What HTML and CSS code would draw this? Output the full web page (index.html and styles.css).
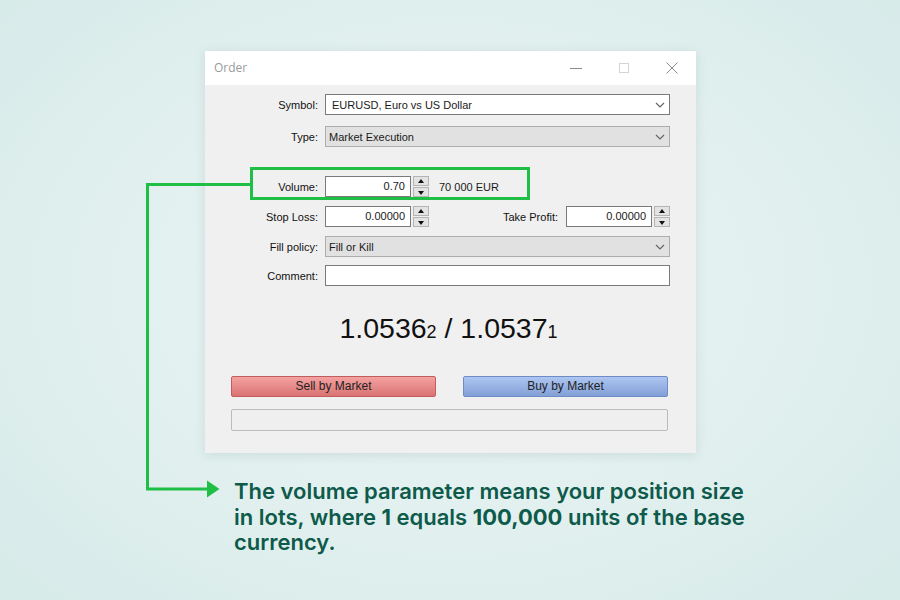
FILE: index.html
```html
<!DOCTYPE html>
<html>
<head>
<meta charset="utf-8">
<link rel="stylesheet" href="styles.css">
</head>
<body>
<div class="stage">
  <div class="window">
    <div class="titlebar">
      <span class="title">Order</span>
      <div class="wincontrols">
        <svg class="wc" width="14" height="14" viewBox="0 0 14 14"><path d="M1 7.5h12" stroke="#8a8a8a" stroke-width="1"/></svg>
        <svg class="wc" width="14" height="14" viewBox="0 0 14 14"><rect x="2.5" y="2.5" width="9" height="9" fill="none" stroke="#d4d4d4" stroke-width="1"/></svg>
        <svg class="wc" width="14" height="14" viewBox="0 0 14 14"><path d="M1.5 1.5l11 11M12.5 1.5l-11 11" stroke="#8a8a8a" stroke-width="1"/></svg>
      </div>
    </div>
    <div class="content">
      <div class="form">
        <div class="row r-symbol">
          <label class="lbl">Symbol:</label>
          <div class="select white"><span>EURUSD, Euro vs US Dollar</span><svg class="chev" width="10" height="6" viewBox="0 0 10 6"><path d="M1 1l4 4 4-4" fill="none" stroke="#666" stroke-width="1.2"/></svg></div>
        </div>
        <div class="row r-type">
          <label class="lbl">Type:</label>
          <div class="select gray"><span>Market Execution</span><svg class="chev" width="10" height="6" viewBox="0 0 10 6"><path d="M1 1l4 4 4-4" fill="none" stroke="#666" stroke-width="1.2"/></svg></div>
        </div>
        <div class="row r-volume">
          <label class="lbl">Volume:</label>
          <div class="numgroup">
            <div class="num">0.70</div>
            <div class="spin"><span class="up"></span><span class="down"></span></div>
            <span class="unit">70 000 EUR</span>
          </div>
        </div>
        <div class="row r-stop">
          <label class="lbl">Stop Loss:</label>
          <div class="numgroup split">
            <div class="num">0.00000</div>
            <div class="spin"><span class="up"></span><span class="down"></span></div>
            <label class="lbl tp">Take Profit:</label>
            <div class="num">0.00000</div>
            <div class="spin"><span class="up"></span><span class="down"></span></div>
          </div>
        </div>
        <div class="row r-fill">
          <label class="lbl">Fill policy:</label>
          <div class="select gray"><span>Fill or Kill</span><svg class="chev" width="10" height="6" viewBox="0 0 10 6"><path d="M1 1l4 4 4-4" fill="none" stroke="#666" stroke-width="1.2"/></svg></div>
        </div>
        <div class="row r-comment">
          <label class="lbl">Comment:</label>
          <div class="select white"></div>
        </div>
      </div>
      <div class="price">1.0536<small>2</small> / 1.0537<small>1</small></div>
      <div class="buttons">
        <div class="btn sell">Sell by Market</div>
        <div class="btn buy">Buy by Market</div>
      </div>
      <div class="progress"></div>
    </div>
  </div>
  <p class="caption">The volume parameter means your position size<br>in lots, where <b>1</b> equals <b>100,000</b> units of the base<br>currency.</p>
</div>
<div class="highlight"></div>
<svg class="connector" width="900" height="600" viewBox="0 0 900 600">
  <path d="M251 184.5H147.5V489H210" fill="none" stroke="#1fbf45" stroke-width="3"/>
  <path d="M207 480.5L219.5 489L207 497.5Z" fill="#1fbf45"/>
</svg>
</body>
</html>
```
FILE: styles.css
```css
html, body {
  margin: 0;
  padding: 0;
}
body {
  width: 900px;
  height: 600px;
  overflow: hidden;
  position: relative;
  background: radial-gradient(ellipse 70% 75% at 50% 48%, #e9f4f3 0%, #e1f0ef 55%, #d6eae8 100%);
  font-family: "Liberation Sans", Arial, sans-serif;
}
.stage {
  padding: 51px 0 0 205px;
}
.window {
  width: 491px;
  box-shadow: 0 2px 10px rgba(90, 130, 125, 0.18);
}
.titlebar {
  height: 34px;
  background: #ffffff;
  display: flex;
  align-items: center;
  justify-content: space-between;
  padding: 0 17px 0 9px;
}
.title {
  font-family: "Open Sans", "Liberation Sans", sans-serif;
  font-size: 12px;
  color: #9a9a9a;
  margin-top: -2px;
}
.wincontrols {
  display: flex;
  gap: 34px;
  align-items: center;
}
.content {
  background: #f0f0f0;
  height: 368px;
  padding: 9px 28px 0 26px;
  box-sizing: border-box;
  font-size: 11px;
  color: #1a1a1a;
}
.form {
  display: flex;
  flex-direction: column;
}
.row {
  display: grid;
  grid-template-columns: 87px 345px;
  column-gap: 7px;
  align-items: center;
  height: 21px;
}
.r-type { margin-top: 11px; }
.r-volume { margin-top: 29px; }
.r-stop { margin-top: 9px; }
.r-fill { margin-top: 9px; }
.r-comment { margin-top: 8px; }
.lbl {
  text-align: right;
  white-space: nowrap;
  font-size: 11px;
  color: #111;
}
.select {
  height: 21px;
  box-sizing: border-box;
  display: flex;
  align-items: center;
  justify-content: space-between;
  padding: 0 4px 0 6px;
}
.select.white {
  background: #ffffff;
  border: 1px solid #7a7a7a;
}
.select.gray {
  background: #e1e1e1;
  border: 1px solid #adadad;
  padding-left: 3px;
}
.numgroup {
  display: flex;
  align-items: center;
  height: 21px;
}
.num {
  width: 86px;
  height: 21px;
  box-sizing: border-box;
  background: #fff;
  border: 1px solid #7a7a7a;
  text-align: right;
  padding-right: 5px;
  line-height: 19px;
}
.spin {
  width: 16px;
  height: 21px;
  margin-left: 2px;
  display: flex;
  flex-direction: column;
  gap: 1px;
}
.spin span {
  flex: 1;
  background: #e3e3e3;
  border: 1px solid #b4b4b4;
  position: relative;
}
.spin span::after {
  content: "";
  position: absolute;
  left: 4px;
  width: 0;
  height: 0;
  border-left: 3.5px solid transparent;
  border-right: 3.5px solid transparent;
}
.spin .up::after {
  top: 2px;
  border-bottom: 4px solid #111;
}
.spin .down::after {
  top: 3px;
  border-top: 4px solid #111;
}
.unit {
  margin-left: 10px;
}
.tp {
  margin-left: auto;
  margin-right: 8px;
}
.price {
  margin-top: 22px;
  text-align: center;
  font-family: "Liberation Sans", Arial, sans-serif;
  font-size: 28.5px;
  color: #111;
  line-height: 40px;
  padding-right: 2px;
}
.price small {
  font-size: 18px;
}
.buttons {
  margin-top: 24px;
  display: flex;
  justify-content: space-between;
}
.btn {
  width: 205px;
  height: 21px;
  box-sizing: border-box;
  text-align: center;
  line-height: 19px;
  border-radius: 2px;
  font-size: 12px;
  color: #222;
}
.sell {
  background: linear-gradient(#f4a1a1, #da7373);
  border: 1px solid #c35c5c;
}
.buy {
  background: linear-gradient(#adc6f2, #829fd6);
  border: 1px solid #6f8cc6;
}
.progress {
  margin-top: 12px;
  width: 437px;
  height: 22px;
  box-sizing: border-box;
  border: 1px solid #bcbcbc;
  border-radius: 2px;
  background: #efefef;
}
.caption {
  margin: 26px 0 0 29px;
  width: 600px;
  white-space: nowrap;
  font-family: Inter, "Liberation Sans", sans-serif;
  font-weight: 600;
  font-size: 22px;
  line-height: 25.5px;
  color: #0e5a4b;
  letter-spacing: 0;
}
.caption b {
  font-weight: 700;
}
.highlight {
  position: absolute;
  left: 250px;
  top: 167px;
  width: 280px;
  height: 33px;
  box-sizing: border-box;
  border: 3px solid #1fbf45;
}
.connector {
  position: absolute;
  left: 0;
  top: 0;
  pointer-events: none;
}
```
